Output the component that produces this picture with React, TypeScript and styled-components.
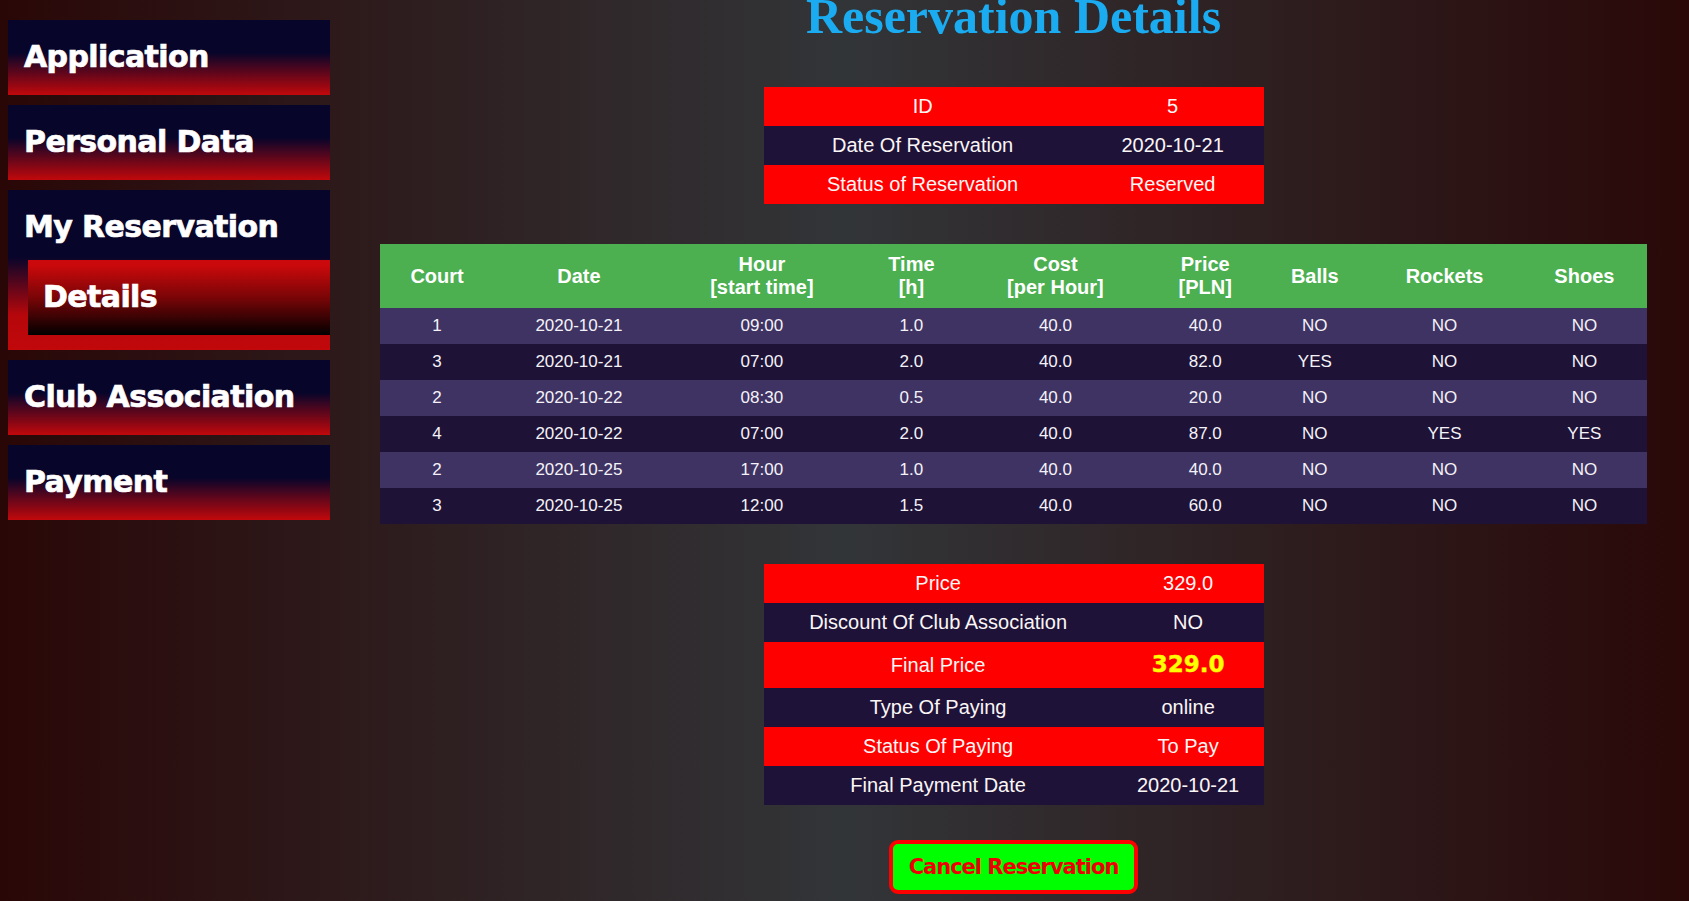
import React from "react";
import styled, { createGlobalStyle } from "styled-components";

const GlobalStyle = createGlobalStyle`
  html, body {
    margin: 0;
    padding: 0;
    height: 100%;
    overflow: hidden;
  }
  body {
    background: linear-gradient(to right, #2a0707 0%, #323538 50%, #2a0808 100%);
    font-family: "Liberation Sans", Arial, sans-serif;
    color: #ffffff;
  }
`;

const Layout = styled.div`
  display: flex;
  align-items: flex-start;
  min-height: 100vh;
`;

const Sidebar = styled.nav`
  flex: none;
  width: 322px;
  margin: 20px 0 0 8px;
  display: flex;
  flex-direction: column;
  gap: 10px;
`;

const NavLabel = styled.span`
  display: block;
  font-family: "DejaVu Sans", "Liberation Sans", sans-serif;
  font-weight: 700;
  font-size: 30px;
  line-height: 35px;
  letter-spacing: -0.6px;
  color: #ffffff;
  -webkit-text-stroke: 0.7px #ffffff;
  white-space: nowrap;
`;

const NavItem = styled.div`
  height: 75px;
  box-sizing: border-box;
  padding: 19px 16px 21px;
  background: linear-gradient(to bottom, #08052a 44%, #c1080b 100%);
  cursor: pointer;
`;

const NavGroup = styled.div`
  box-sizing: border-box;
  padding: 19px 0 15px;
  background: linear-gradient(to bottom, #08052a 42%, #b5070b 78%, #c1080b 100%);
  & > ${NavLabel} {
    padding-left: 16px;
  }
`;

const SubItem = styled.div`
  height: 75px;
  box-sizing: border-box;
  margin: 16px 0 0 20px;
  padding: 19px 15px 21px;
  background: linear-gradient(to bottom, #c9090b 8%, #7a0507 50%, #020000 100%);
`;

const Main = styled.main`
  flex: 1;
  margin-left: 8px;
  display: flex;
  flex-direction: column;
  align-items: center;
`;

const Title = styled.h1`
  margin: -9px 0 0;
  font-family: "Liberation Serif", "Times New Roman", serif;
  font-weight: 700;
  font-size: 50px;
  line-height: 50px;
  color: #1aabf0;
`;

const InfoTable = styled.table<{ $gap: number }>`
  width: 500px;
  margin-top: ${(p) => p.$gap}px;
  border-collapse: collapse;
  border-spacing: 0;
`;

const InfoRow = styled.tr<{ $accent: boolean; $tall?: boolean }>`
  background: ${(p) => (p.$accent ? "#ff0000" : "#1e1238")};
  & > td {
    padding: 8px;
    text-align: center;
    font-size: 20px;
    line-height: ${(p) => (p.$tall ? "29px" : "23px")};
    color: #fbf6f6;
  }
`;

const FinalValue = styled.span`
  font-family: "DejaVu Sans", "Liberation Sans", sans-serif;
  font-weight: 700;
  font-size: 23px;
  color: #ffff00;
  -webkit-text-stroke: 0.4px #ffff00;
`;

const CourtTable = styled.table`
  width: 1267px;
  margin-top: 40px;
  border-collapse: collapse;
  border-spacing: 0;
`;

const HeadCell = styled.th`
  background: #4caf50;
  padding: 9px 8px;
  font-size: 20px;
  line-height: 23px;
  font-weight: 700;
  color: #ffffff;
  text-align: center;
  vertical-align: middle;
`;

const CourtRow = styled.tr<{ $odd: boolean }>`
  background: ${(p) => (p.$odd ? "#3f3363" : "#1e1237")};
  & > td {
    padding: 8px;
    font-size: 17px;
    line-height: 20px;
    text-align: center;
    color: #f4f2f8;
  }
`;

const CancelButton = styled.button`
  margin-top: 35px;
  width: 249px;
  height: 54px;
  box-sizing: border-box;
  border: 4px solid #ff0000;
  border-radius: 9px;
  background: #00ff00;
  color: #ee0000;
  font-family: "DejaVu Sans", "Liberation Sans", sans-serif;
  font-weight: 700;
  font-size: 21px;
  letter-spacing: -1px;
  padding: 0;
  cursor: pointer;
`;

const headers: React.ReactNode[] = [
  "Court",
  "Date",
  <>Hour<br />[start time]</>,
  <>Time<br />[h]</>,
  <>Cost<br />[per Hour]</>,
  <>Price<br />[PLN]</>,
  "Balls",
  "Rockets",
  "Shoes",
];

const rows = [
  ["1", "2020-10-21", "09:00", "1.0", "40.0", "40.0", "NO", "NO", "NO"],
  ["3", "2020-10-21", "07:00", "2.0", "40.0", "82.0", "YES", "NO", "NO"],
  ["2", "2020-10-22", "08:30", "0.5", "40.0", "20.0", "NO", "NO", "NO"],
  ["4", "2020-10-22", "07:00", "2.0", "40.0", "87.0", "NO", "YES", "YES"],
  ["2", "2020-10-25", "17:00", "1.0", "40.0", "40.0", "NO", "NO", "NO"],
  ["3", "2020-10-25", "12:00", "1.5", "40.0", "60.0", "NO", "NO", "NO"],
];

const reservationInfo = [
  ["ID", "5"],
  ["Date Of Reservation", "2020-10-21"],
  ["Status of Reservation", "Reserved"],
];

export default function App() {
  return (
    <>
      <GlobalStyle />
      <Layout>
        <Sidebar>
          <NavItem>
            <NavLabel>Application</NavLabel>
          </NavItem>
          <NavItem>
            <NavLabel>Personal Data</NavLabel>
          </NavItem>
          <NavGroup>
            <NavLabel>My Reservation</NavLabel>
            <SubItem>
              <NavLabel>Details</NavLabel>
            </SubItem>
          </NavGroup>
          <NavItem>
            <NavLabel>Club Association</NavLabel>
          </NavItem>
          <NavItem>
            <NavLabel>Payment</NavLabel>
          </NavItem>
        </Sidebar>
        <Main>
          <Title>Reservation Details</Title>
          <InfoTable $gap={46}>
            <tbody>
              {reservationInfo.map(([k, v], i) => (
                <InfoRow key={k} $accent={i % 2 === 0}>
                  <td>{k}</td>
                  <td>{v}</td>
                </InfoRow>
              ))}
            </tbody>
          </InfoTable>
          <CourtTable>
            <thead>
              <tr>
                {headers.map((h, i) => (
                  <HeadCell key={i}>{h}</HeadCell>
                ))}
              </tr>
            </thead>
            <tbody>
              {rows.map((r, i) => (
                <CourtRow key={i} $odd={i % 2 === 0}>
                  {r.map((c, j) => (
                    <td key={j}>{c}</td>
                  ))}
                </CourtRow>
              ))}
            </tbody>
          </CourtTable>
          <InfoTable $gap={40}>
            <tbody>
              <InfoRow $accent>
                <td>Price</td>
                <td>329.0</td>
              </InfoRow>
              <InfoRow $accent={false}>
                <td>Discount Of Club Association</td>
                <td>NO</td>
              </InfoRow>
              <InfoRow $accent $tall>
                <td>Final Price</td>
                <td>
                  <FinalValue>329.0</FinalValue>
                </td>
              </InfoRow>
              <InfoRow $accent={false}>
                <td>Type Of Paying</td>
                <td>online</td>
              </InfoRow>
              <InfoRow $accent>
                <td>Status Of Paying</td>
                <td>To Pay</td>
              </InfoRow>
              <InfoRow $accent={false}>
                <td>Final Payment Date</td>
                <td>2020-10-21</td>
              </InfoRow>
            </tbody>
          </InfoTable>
          <CancelButton type="button">Cancel Reservation</CancelButton>
        </Main>
      </Layout>
    </>
  );
}
